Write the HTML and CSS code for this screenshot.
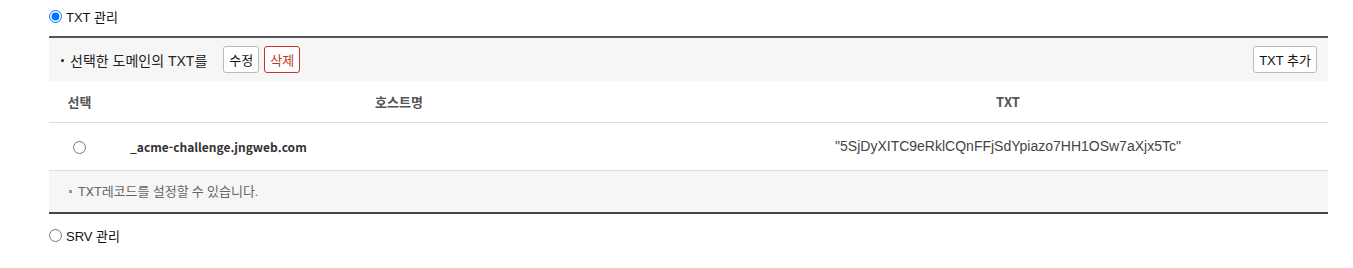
FILE: index.html
```html
<!DOCTYPE html>
<html lang="ko">
<head>
  <meta charset="UTF-8" />
  <title>DNS TXT 관리</title>
  <link rel="stylesheet" href="styles.css">
</head>
<body>
  <div class="dns-wrap">
    <label class="section-radio">
      <input type="radio" name="recordType" checked />
      <span>TXT 관리</span>
    </label>

    <div class="record-box">
      <div class="toolbar">
        <div class="toolbar-left">
          <span class="toolbar-title">선택한 도메인의 TXT를</span>
          <button type="button" class="btn">수정</button>
          <button type="button" class="btn btn-danger">삭제</button>
        </div>
        <button type="button" class="btn">TXT 추가</button>
      </div>

      <table class="record-table">
        <colgroup>
          <col class="col-select" />
          <col class="col-host" />
          <col class="col-txt" />
        </colgroup>
        <thead>
          <tr>
            <th>선택</th>
            <th>호스트명</th>
            <th>TXT</th>
          </tr>
        </thead>
        <tbody>
          <tr>
            <td class="cell-select"><input type="radio" name="txtRow" /></td>
            <td class="cell-host">_acme-challenge.jngweb.com</td>
            <td class="cell-txt">"5SjDyXITC9eRklCQnFFjSdYpiazo7HH1OSw7aXjx5Tc"</td>
          </tr>
        </tbody>
      </table>

      <p class="note">TXT레코드를 설정할 수 있습니다.</p>
    </div>

    <label class="section-radio srv">
      <input type="radio" name="recordType" />
      <span>SRV 관리</span>
    </label>
  </div>
</body>
</html>
```

FILE: styles.css
```css
* {
  margin: 0;
  padding: 0;
  box-sizing: border-box;
}

body {
  background: #fff;
  font-family: 'Liberation Sans', 'Noto Sans CJK KR', sans-serif;
  color: #222;
}

.dns-wrap {
  width: 1328px;
  padding-left: 49px;
  padding-top: 9px;
}

.section-radio {
  display: flex;
  align-items: center;
  gap: 4px;
  height: 14px;
  font-size: 13px;
  color: #111;
}

.section-radio input {
  width: 13px;
  height: 13px;
  margin: 0;
}

.srv {
  margin-top: 15px;
}

.record-box {
  margin-top: 13px;
  border-top: 2px solid #555;
  border-bottom: 2px solid #444;
}

.toolbar {
  display: flex;
  justify-content: space-between;
  align-items: center;
  height: 43px;
  padding: 0 11px 0 12px;
  background: #f6f6f6;
}

.toolbar-left {
  display: flex;
  align-items: center;
}

.toolbar-title {
  font-size: 14px;
  color: #222;
  margin-right: 16px;
}

.toolbar-title::before {
  content: "";
  display: inline-block;
  width: 3px;
  height: 3px;
  background: #222;
  border-radius: 50%;
  vertical-align: middle;
  margin-right: 6px;
  position: relative;
  top: -1px;
}

.btn {
  height: 27px;
  padding: 0 5px;
  border: 1px solid #bbb;
  border-radius: 3px;
  background: #fff;
  color: #111;
  font-family: 'Liberation Sans', 'Noto Sans CJK KR', sans-serif;
  font-size: 13px;
  cursor: pointer;
}

.btn + .btn {
  margin-left: 5px;
}

.btn-danger {
  border-color: #c0392b;
  color: #c0392b;
}

.record-table {
  width: 100%;
  border-collapse: collapse;
  table-layout: fixed;
}

.col-select {
  width: 61px;
}

.col-host {
  width: 578px;
}

.record-table th {
  height: 41px;
  border-bottom: 1px solid #ddd;
  font-family: 'Noto Sans CJK KR', sans-serif;
  font-size: 13px;
  font-weight: bold;
  color: #555;
  text-align: center;
}

.record-table td {
  height: 48px;
  border-bottom: 1px solid #ddd;
  font-size: 13px;
  color: #333;
}

.cell-select {
  text-align: center;
}

.cell-select input {
  width: 13px;
  height: 13px;
  margin: 0;
  vertical-align: middle;
}

.cell-host {
  padding-left: 20px;
  font-family: 'Noto Sans CJK KR', sans-serif;
  font-size: 12px !important;
  font-weight: bold;
  color: #333;
}

.cell-txt {
  text-align: center;
  font-size: 14px !important;
  color: #444 !important;
}

.note {
  height: 41px;
  line-height: 41px;
  padding-left: 20px;
  background: #f6f6f6;
  font-family: 'Roboto', 'Noto Sans CJK KR', sans-serif;
  font-size: 13px;
  color: #666;
}

.note::before {
  content: "";
  display: inline-block;
  width: 3px;
  height: 3px;
  background: #999;
  vertical-align: middle;
  margin-right: 6px;
  position: relative;
  top: -1px;
}
```
